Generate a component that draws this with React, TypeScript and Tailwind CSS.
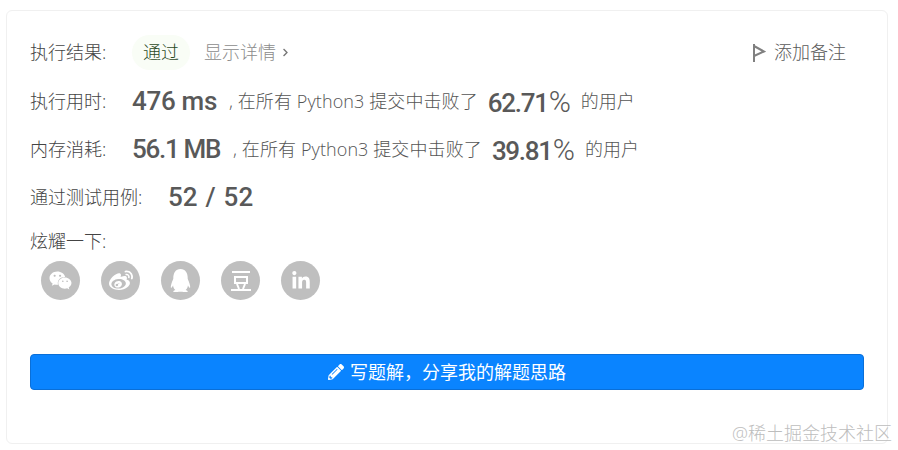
import { FaWeixin, FaWeibo, FaQq, FaLinkedinIn, FaPencilAlt, FaChevronRight } from "react-icons/fa";

const cjk = "font-['Open_Sans','Noto_Sans_CJK_SC',sans-serif]";
const num = "font-['Roboto','Noto_Sans_CJK_SC',sans-serif]";

function Douban() {
  return (
    <svg width="24" height="24" viewBox="0 0 24 24" fill="none" stroke="#fff" strokeWidth="2">
      <path d="M3 3h18M6 8h12v6H6zM8 15l2 5M16 15l-2 5M2 21h20" />
    </svg>
  );
}

function StatRow({ label, value, pct, valueClass }: { label: string; value: string; pct: string; valueClass: string }) {
  return (
    <div className="flex h-[48px] items-center">
      <span className="w-[102px] shrink-0 text-[18px] font-light text-[#444]">{label}</span>
      <span className={`${num} text-[26px] font-medium text-[#595959] ${valueClass}`}>{value}</span>
      <span className="text-[18px] font-light tracking-[0.1px] text-[#555]">, 在所有 Python3 提交中击败了</span>
      <span className={`${num} ml-[10px] text-[26px] font-medium tracking-[-1.3px] text-[#595959]`}>
        {pct}
        <span className="ml-[1px] text-[30px] font-light tracking-normal">%</span>
      </span>
      <span className="ml-[10px] text-[18px] font-light text-[#555]">的用户</span>
    </div>
  );
}

export default function App() {
  const icons = [
    <FaWeixin key="w" className="text-[23px]" />,
    <FaWeibo key="b" className="text-[24px]" />,
    <FaQq key="q" className="text-[23px]" />,
    <Douban key="d" />,
    <FaLinkedinIn key="l" className="text-[20px]" />,
  ];
  return (
    <div className={`${cjk} relative h-[450px] w-[898px] overflow-hidden bg-white pl-[6px] pt-[10px]`}>
      <div className="flex h-[434px] w-[882px] flex-col rounded-md border border-[#f0f0f0] pl-[23px] pr-[23px] pt-[17px]">
        <div className="flex h-[49px] items-center">
          <span className="w-[102px] shrink-0 text-[18px] font-light text-[#444]">执行结果:</span>
          <span className="flex h-[35px] w-[58px] items-center justify-center rounded-full bg-[#f9fdf6] text-[18px] font-light text-[#2c4a1f]">
            通过
          </span>
          <span className="ml-[14px] text-[18px] font-light text-[#8c8c8c]">显示详情</span>
          <FaChevronRight className="ml-[5px] text-[9px] text-[#777]" />
          <span className="ml-auto mr-[18px] flex items-center text-[18px] font-light text-[#595959]">
            <svg width="14" height="19" viewBox="0 0 14 19" className="mr-[8px]" fill="none" stroke="#808080" strokeWidth="2">
              <path d="M2 1v18M2 3l10 5.5L2 13" />
            </svg>
            添加备注
          </span>
        </div>
        <StatRow label="执行用时:" value="476 ms" pct="62.71" valueClass="mr-[12px] tracking-[-0.3px]" />
        <StatRow label="内存消耗:" value="56.1 MB" pct="39.81" valueClass="mr-[13px] tracking-[-1.3px]" />
        <div className="flex h-[48px] items-center">
          <span className="w-[138px] shrink-0 text-[18px] font-light text-[#444]">通过测试用例:</span>
          <span className={`${num} text-[26px] font-medium text-[#595959] [word-spacing:1.5px]`}>52 / 52</span>
        </div>
        <div className="mt-[8px] text-[18px] font-light leading-[24px] text-[#444]">炫耀一下:</div>
        <div className="ml-[11px] mt-[8px] flex gap-[21px]">
          {icons.map((icon, i) => (
            <div key={i} className="flex h-[39px] w-[39px] items-center justify-center rounded-full bg-[#bfbfbf] text-white">
              {icon}
            </div>
          ))}
        </div>
        <button className="mt-[54px] flex h-[36px] w-[834px] items-center justify-center rounded-[4px] border border-[#0a6fd8] bg-[#0a84ff] text-[18px] font-normal text-white">
          <FaPencilAlt className="mr-[6px] text-[16px]" />
          写题解，分享我的解题思路
        </button>
      </div>
      <span className="absolute bottom-[5px] right-[6px] text-[18px] font-light leading-[24px] text-[#bdbdbd]">@稀土掘金技术社区</span>
    </div>
  );
}
